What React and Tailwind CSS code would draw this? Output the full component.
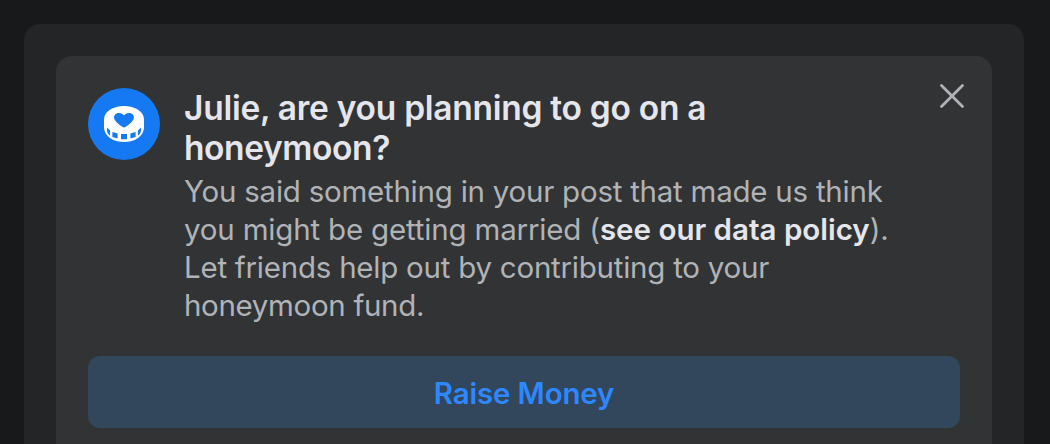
function CoinHeart() {
  return (
    <svg width="72" height="72" viewBox="0 0 72 72" className="shrink-0" aria-hidden="true">
      <circle cx="36" cy="36" r="36" fill="#1479f2" />
      <path d="M16 31.500C16 23.500 25 18 36 18s20 5.500 20 13.500v8C56 48 47 54 36 54S16 48 16 39.500z" fill="#fff" />
      <path d="M36 39.500c-1.200 0-10-5.700-10-9.900 0-2.700 2.200-4.700 5-4.700 2.200 0 4.100 1 5 2.500.9-1.500 2.800-2.500 5-2.500 2.800 0 5 2 5 4.700 0 4.200-8.800 9.900-10 9.900z" fill="#1479f2" />
      <path d="M19 39.600l3.100 3v5.200c-1.900-1.500-3.100-3.400-3.100-5.500zM24.400 43.900l5.200 1.500v5.200l-5.200-1.700zM33 46h6v5.200h-6zM42.400 45.400l5.200-1.500v5l-5.200 1.700zM53 39.600l-3.100 3v5.200c1.900-1.500 3.100-3.400 3.100-5.500z" fill="#1479f2" />
    </svg>
  );
}

export default function App() {
  return (
    <main className="h-[444px] w-[1050px] overflow-hidden bg-[#18191a] px-6 pt-6 font-['Inter',sans-serif]">
      <section className="h-[460px] w-[1000px] rounded-2xl bg-[#242526] p-8">
        <article className="h-[460px] rounded-2xl bg-[#323335] p-8">
          <div className="flex h-[268px] items-start gap-6">
            <CoinHeart />
            <div className="min-w-0 flex-1 whitespace-nowrap">
              <h1 className="text-[33.5px] leading-[40px] font-semibold tracking-[-0.27px] text-[#e4e6eb]">
                Julie, are you planning to go on a
                <br />
                <span className="tracking-[-0.4px]">honeymoon?</span>
              </h1>
              <p className="mt-1 text-[29.5px] leading-[38px] tracking-[-0.24px] text-[#b0b3b8]">
                You said something in your post that made us think
                <br />
                <span className="tracking-[-0.18px]">you might be getting married (</span>
                <strong className="font-semibold tracking-normal text-[#e4e6eb]">see our data policy</strong>).
                <br />
                Let friends help out by contributing to your
                <br />
                <span className="tracking-[-0.33px]">honeymoon fund.</span>
              </p>
            </div>
            <button aria-label="Close" className="-mt-1 -mr-1">
              <svg width="24" height="24" viewBox="0 0 24 24" fill="none" stroke="#b0b3b8" strokeWidth="2.7" strokeLinecap="round">
                <path d="M1.500 1.500l21 21M22.500 1.500l-21 21" />
              </svg>
            </button>
          </div>
          <button className="flex h-[72px] w-full items-center justify-center rounded-xl bg-[#32465c] pt-0.5 text-[29.5px] font-semibold tracking-[-0.17px] text-[#2d88ff]">
            Raise Money
          </button>
        </article>
      </section>
    </main>
  );
}
